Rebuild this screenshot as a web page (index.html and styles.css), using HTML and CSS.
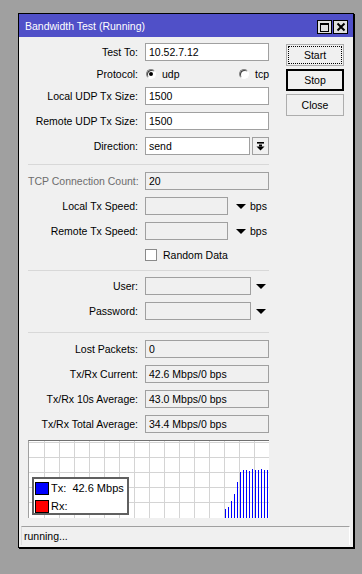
FILE: index.html
```html
<!DOCTYPE html>
<html>
<head>
<meta charset="utf-8">
<link rel="stylesheet" href="styles.css">
</head>
<body>
<div class="window">
  <div class="titlebar">
    <span class="title">Bandwidth Test (Running)</span>
    <div class="tbtns">
      <span class="tbtn"><span class="maxicon"></span></span>
      <span class="tbtn"><svg width="10" height="10" viewBox="0 0 10 10"><path d="M1.5 1.5 L8.5 8.5 M8.5 1.5 L1.5 8.5" stroke="#000" stroke-width="2"/></svg></span>
    </div>
  </div>
  <div class="wbody">
    <div class="main">
      <div class="form">
        <div class="row r-test">
          <span class="lbl">Test To:</span>
          <span class="box w-full">10.52.7.12</span>
        </div>
        <div class="row r-proto">
          <span class="lbl">Protocol:</span>
          <div class="radios">
            <span class="radio-item"><span class="radio on"></span><span>udp</span></span>
            <span class="radio-item"><span class="radio"></span><span>tcp</span></span>
          </div>
        </div>
        <div class="row r-local">
          <span class="lbl">Local UDP Tx Size:</span>
          <span class="box w-full">1500</span>
        </div>
        <div class="row">
          <span class="lbl">Remote UDP Tx Size:</span>
          <span class="box w-full">1500</span>
        </div>
        <div class="row">
          <span class="lbl">Direction:</span>
          <div class="field">
            <span class="box w-dir">send</span>
            <span class="ddbtn"><svg width="9" height="9" viewBox="0 0 9 9"><rect x="1" y="0" width="7" height="1.6" fill="#000"/><rect x="3" y="2.5" width="3" height="2" fill="#000"/><path d="M0.5 4.5 L8.5 4.5 L4.5 8.5 Z" fill="#000"/></svg></span>
          </div>
        </div>
        <div class="sep s1"></div>
        <div class="row r-after-sep">
          <span class="lbl dim">TCP Connection Count:</span>
          <span class="box ro w-full">20</span>
        </div>
        <div class="row">
          <span class="lbl">Local Tx Speed:</span>
          <div class="field">
            <span class="box ro w-speed"></span>
            <span class="tri t-speed"></span>
            <span class="unit">bps</span>
          </div>
        </div>
        <div class="row">
          <span class="lbl">Remote Tx Speed:</span>
          <div class="field">
            <span class="box ro w-speed"></span>
            <span class="tri t-speed"></span>
            <span class="unit">bps</span>
          </div>
        </div>
        <div class="row r-check">
          <span class="lbl"></span>
          <div class="field">
            <span class="check"></span>
            <span class="checklbl">Random Data</span>
          </div>
        </div>
        <div class="sep s2"></div>
        <div class="row r-user">
          <span class="lbl">User:</span>
          <div class="field">
            <span class="box ro w-user"></span>
            <span class="tri t-user"></span>
          </div>
        </div>
        <div class="row">
          <span class="lbl">Password:</span>
          <div class="field">
            <span class="box ro w-user"></span>
            <span class="tri t-user"></span>
          </div>
        </div>
        <div class="sep s3"></div>
        <div class="row r-lost">
          <span class="lbl">Lost Packets:</span>
          <span class="box ro w-full">0</span>
        </div>
        <div class="row">
          <span class="lbl">Tx/Rx Current:</span>
          <span class="box ro w-full">42.6 Mbps/0 bps</span>
        </div>
        <div class="row">
          <span class="lbl">Tx/Rx 10s Average:</span>
          <span class="box ro w-full">43.0 Mbps/0 bps</span>
        </div>
        <div class="row">
          <span class="lbl">Tx/Rx Total Average:</span>
          <span class="box ro w-full">34.4 Mbps/0 bps</span>
        </div>
        <div class="graph">
          <svg class="plot" width="240" height="77" viewBox="0 0 240 77">
            <g stroke="#d4d4d4" stroke-width="1">
              <path d="M15.5 0V77M30.5 0V77M45.5 0V77M60.5 0V77M75.5 0V77M90.5 0V77M105.5 0V77M120.5 0V77M135.5 0V77M150.5 0V77M165.5 0V77M180.5 0V77M195.5 0V77M210.5 0V77M225.5 0V77"/>
              <path d="M0 1.5H240M0 16.5H240M0 31.5H240M0 46.5H240M0 61.5H240"/>
            </g>
            <g stroke="#0000ff" stroke-width="1">
              <path d="M196.5 77V68M199.5 77V66M202.5 77V60M205.5 77V53M208.5 77V41M211.5 77V31M214.5 77V29M217.5 77V29M220.5 77V30M223.5 77V28M226.5 77V29M229.5 77V29M232.5 77V28M235.5 77V29M238.5 77V29"/>
            </g>
          </svg>
          <div class="legend">
            <div class="leg-row"><span class="sw blue"></span><span class="legtxt">Tx:&nbsp;&nbsp;42.6 Mbps</span></div>
            <div class="leg-row"><span class="sw red"></span><span class="legtxt">Rx:</span></div>
          </div>
        </div>
      </div>
      <div class="buttons">
        <button class="btn focus"><span>Start</span></button>
        <button class="btn default"><span>Stop</span></button>
        <button class="btn"><span>Close</span></button>
      </div>
    </div>
    <div class="status">running...</div>
  </div>
</div>
</body>
</html>
```

FILE: styles.css
```css
html, body {
  margin: 0;
  padding: 0;
}
body {
  background: #a0a0a0;
  width: 362px;
  height: 574px;
  overflow: hidden;
  font-family: "Liberation Sans", Arial, sans-serif;
  font-size: 10.5px;
  color: #000;
}
.window {
  margin: 13px 0 0 18px;
  width: 334px;
  height: 533px;
  border: 1px solid #000;
  box-shadow: 1px 1px 0 #000;
  background: #f0f0f0;
  display: flex;
  flex-direction: column;
}
.titlebar {
  height: 23px;
  background: #5050c8;
  display: flex;
  align-items: center;
  justify-content: space-between;
  padding-left: 6px;
  padding-right: 5px;
}
.title {
  color: #fff;
  font-size: 10.5px;
  margin-top: 1px;
}
.tbtns {
  display: flex;
  gap: 1px;
  margin-top: 3px;
}
.tbtn {
  width: 13px;
  height: 12px;
  border: 1px solid #000;
  background: #e0e0e0;
  display: flex;
  align-items: center;
  justify-content: center;
}
.maxicon {
  width: 7px;
  height: 6px;
  border: 1px solid #000;
  border-top-width: 2px;
}
.wbody {
  flex: 1;
  display: flex;
  flex-direction: column;
  padding: 0 3px 2px 2px;
}
.main {
  flex: 1;
  display: flex;
  padding-left: 7px;
}
.form {
  width: 241px;
  padding-top: 6px;
  display: flex;
  flex-direction: column;
}
.row {
  display: flex;
  align-items: center;
  height: 18px;
  margin-top: 7px;
}
.r-test { margin-top: 0; }
.r-proto { margin-top: 4px; }
.r-local { margin-top: 4px; }
.lbl {
  width: 110px;
  text-align: right;
  margin-right: 7px;
  white-space: nowrap;
  flex: none;
}
.lbl.dim { color: #6d6d6d; }
.field {
  display: flex;
  align-items: center;
  height: 18px;
}
.box {
  box-sizing: border-box;
  height: 18px;
  border: 1px solid #a0a0a0;
  background: #fff;
  padding-left: 3px;
  line-height: 16px;
  white-space: nowrap;
  display: block;
}
.box.ro { background: #f0f0f0; }
.w-full { width: 124px; }
.w-dir { width: 105px; }
.w-speed { width: 83px; }
.w-user { width: 106px; }
.ddbtn {
  box-sizing: border-box;
  width: 17px;
  height: 18px;
  margin-left: 2px;
  border: 1px solid #a0a0a0;
  background: #f0f0f0;
  display: flex;
  align-items: center;
  justify-content: center;
}
.tri {
  width: 0;
  height: 0;
  border-left: 5px solid transparent;
  border-right: 5px solid transparent;
  border-top: 5px solid #000;
}
.t-speed { margin-left: 8px; }
.unit { margin-left: 4px; }
.t-user { margin-left: 5px; }
.radios {
  width: 124px;
  display: flex;
  justify-content: space-between;
}
.radio-item {
  display: flex;
  align-items: center;
  gap: 6px;
}
.radio {
  box-sizing: border-box;
  width: 10px;
  height: 10px;
  border-radius: 50%;
  border: 1px solid;
  border-color: #808080 #ffffff #ffffff #808080;
  background: #fff;
  box-shadow: inset 1px 1px 0 #404040;
  margin-left: 1px;
  display: flex;
  align-items: center;
  justify-content: center;
}
.radio.on::after {
  content: "";
  width: 4px;
  height: 4px;
  border-radius: 50%;
  background: #000;
}
.check {
  box-sizing: border-box;
  width: 12px;
  height: 12px;
  border: 1px solid #8a8a8a;
  background: #fff;
}
.checklbl { margin-left: 6px; }
.r-check { margin-top: 6px; }
.sep {
  height: 1px;
  background: #d8d8d8;
  width: 241px;
}
.s1 { margin-top: 9px; }
.s2 { margin-top: 6px; }
.s3 { margin-top: 12px; }
.r-after-sep { margin-top: 7px; }
.r-user { margin-top: 6px; }
.r-lost { margin-top: 7px; }
.graph {
  position: relative;
  margin-top: 7px;
  width: 241px;
  height: 78px;
  box-sizing: border-box;
  border-top: 1px solid #707070;
  border-left: 1px solid #a0a0a0;
  background: #fff;
}
.plot { display: block; }
.legend {
  position: absolute;
  left: 3px;
  top: 36px;
  width: 92px;
  height: 33px;
  border: 2px solid #606060;
  background: #fff;
  padding: 1px 0 0 1px;
  box-sizing: content-box;
  font-size: 11px;
}
.leg-row {
  display: flex;
  align-items: center;
  height: 16px;
  white-space: nowrap;
}
.leg-row + .leg-row { margin-top: 2px; }
.legtxt { white-space: nowrap; }
.sw {
  box-sizing: border-box;
  width: 14px;
  height: 13px;
  border: 1px solid #000;
  margin-right: 2px;
  flex: none;
}
.sw.blue { background: #0000ff; }
.sw.red { background: #ff0000; }
.buttons {
  margin-left: 17px;
  padding-top: 7px;
  display: flex;
  flex-direction: column;
  gap: 3px;
}
.btn {
  width: 58px;
  height: 22px;
  box-sizing: border-box;
  border: 1px solid #adadad;
  background: #f0f0f0;
  font-family: "Liberation Sans", Arial, sans-serif;
  font-size: 10.5px;
  color: #000;
  padding: 1px;
  margin: 0;
  display: flex;
}
.btn span {
  flex: 1;
  display: flex;
  align-items: center;
  justify-content: center;
  border: 1px solid transparent;
}
.btn.focus span { border: 1px dotted #000; }
.btn.default { border: 2px solid #000; padding: 0; }
.status {
  height: 19px;
  box-sizing: border-box;
  border-top: 1px solid #a0a0a0;
  border-left: 1px solid #dcdcdc;
  border-right: 1px solid #fff;
  padding-left: 2px;
  line-height: 18px;
  margin-top: 7px;
}
```
